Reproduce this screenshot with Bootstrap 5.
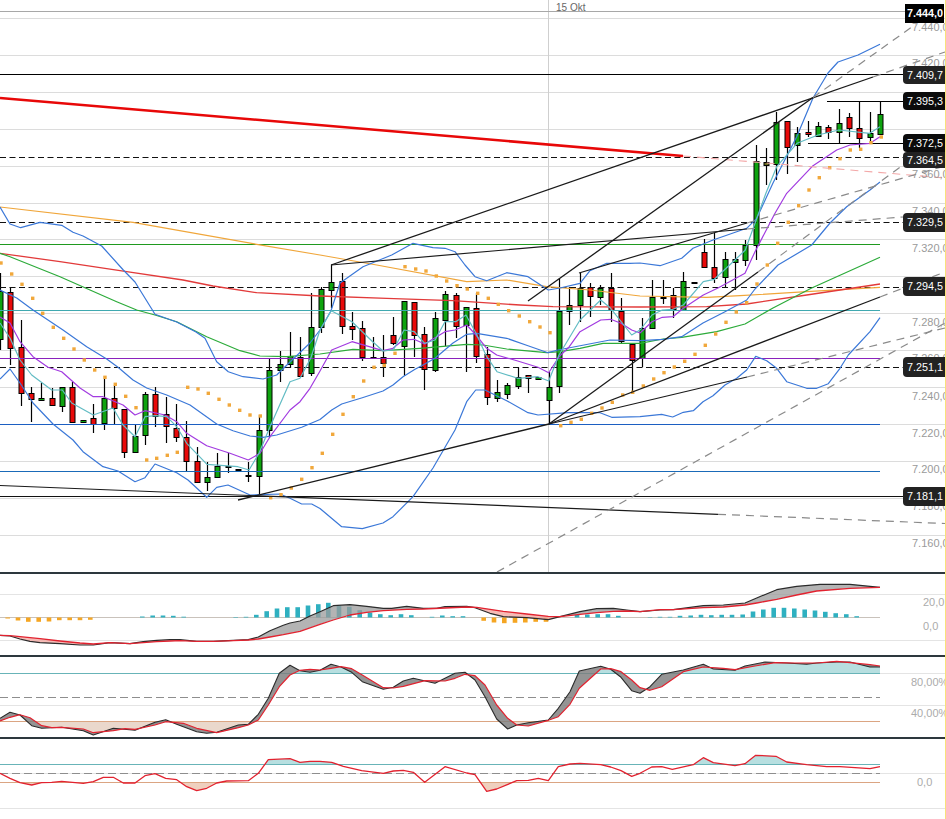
<!DOCTYPE html>
<html lang="de">
<head>
<meta charset="utf-8">
<title>Chart</title>
<link href="https://cdn.jsdelivr.net/npm/bootstrap@5.3.0/dist/css/bootstrap.min.css" rel="stylesheet">
<style>
html,body{margin:0;background:#fff;overflow:hidden}
.chart-frame{width:946px;height:819px;overflow:hidden;font-family:"Liberation Sans",Arial,sans-serif;background:#fff}
.chart-frame svg{display:block}
.edge-strip{right:0;top:0;bottom:0;width:1px;background:#f8e27a}
.price-tag{left:903px;width:42px;color:#fff;font-size:10.8px;line-height:1;background:#222;border-radius:4px 0 0 4px;padding-left:4px;white-space:nowrap}
.price-tag-top{background:#000;border-radius:0;font-weight:700;left:905px;width:39px;padding-left:2px}
.price-tag-black{background:#0b0b0b}
.axis-tag{left:912px;color:#9a9a9a;font-size:11px;line-height:12px;white-space:nowrap}
.sub-tag{color:#ababab;font-size:11px;line-height:12px;white-space:nowrap}
.date-tag{left:556px;top:2px;color:#666;font-size:10px;line-height:12px}
</style>
</head>
<body>
<div class="chart-frame position-relative">
  <svg id="plot" width="946" height="819" viewBox="0 0 946 819" xmlns="http://www.w3.org/2000/svg"></svg>

  <div class="date-tag position-absolute">15 Okt</div>

  <div class="axis-tag position-absolute" style="top:21px">7.440,0</div>
  <div class="axis-tag position-absolute" style="top:57px">7.420,0</div>
  <div class="axis-tag position-absolute" style="top:168px">7.360,0</div>
  <div class="axis-tag position-absolute" style="top:205px">7.340,0</div>
  <div class="axis-tag position-absolute" style="top:242px">7.320,0</div>
  <div class="axis-tag position-absolute" style="top:316px">7.280,0</div>
  <div class="axis-tag position-absolute" style="top:352px">7.260,0</div>
  <div class="axis-tag position-absolute" style="top:390px">7.240,0</div>
  <div class="axis-tag position-absolute" style="top:427px">7.220,0</div>
  <div class="axis-tag position-absolute" style="top:463px">7.200,0</div>
  <div class="axis-tag position-absolute" style="top:500px">7.180,0</div>
  <div class="axis-tag position-absolute" style="top:537px">7.160,0</div>

  <div class="price-tag price-tag-top position-absolute d-flex align-items-center" style="top:4px;height:19px">7.444,0</div>
  <div class="price-tag position-absolute d-flex align-items-center" style="top:66px;height:18px">7.409,7</div>
  <div class="price-tag price-tag-black position-absolute d-flex align-items-center" style="top:92px;height:18px">7.395,3</div>
  <div class="price-tag price-tag-black position-absolute d-flex align-items-center" style="top:134px;height:18px">7.372,5</div>
  <div class="price-tag position-absolute d-flex align-items-center" style="top:152px;height:16px">7.364,5</div>
  <div class="price-tag position-absolute d-flex align-items-center" style="top:213px;height:19px">7.329,5</div>
  <div class="price-tag position-absolute d-flex align-items-center" style="top:277px;height:19px">7.294,5</div>
  <div class="price-tag position-absolute d-flex align-items-center" style="top:357px;height:20px">7.251,1</div>
  <div class="price-tag position-absolute d-flex align-items-center" style="top:487px;height:19px">7.181,1</div>

  <div class="sub-tag position-absolute" style="left:923px;top:596px">20,0</div>
  <div class="sub-tag position-absolute" style="left:923px;top:620px">0,0</div>
  <div class="sub-tag position-absolute" style="left:911px;top:676px">80,00%</div>
  <div class="sub-tag position-absolute" style="left:911px;top:707px">40,00%</div>
  <div class="sub-tag position-absolute" style="left:917px;top:776px">0,0</div>

  <div class="edge-strip position-absolute"></div>
</div>

<script>
(function(){
var svg=document.getElementById('plot'),out=[],defs=[];
function pts(a){return a.map(function(p){return p[0].toFixed(1)+','+p[1].toFixed(1)}).join(' ')}
function line(x1,y1,x2,y2,c,w,dash){out.push('<line x1="'+x1+'" y1="'+y1+'" x2="'+x2+'" y2="'+y2+'" stroke="'+c+'" stroke-width="'+w+'"'+(dash?' stroke-dasharray="'+dash+'"':'')+'/>')}
function poly(a,c,w,op){out.push('<polyline fill="none" stroke-linejoin="round" points="'+pts(a)+'" stroke="'+c+'" stroke-width="'+w+'"'+(op?' opacity="'+op+'"':'')+'/>')}
function area(a,c,clip,op){out.push('<polygon points="'+pts(a)+'" fill="'+c+'"'+(clip?' clip-path="url(#'+clip+')"':'')+(op?' opacity="'+op+'"':'')+'/>')}
function rectClip(id,y,h){defs.push('<clipPath id="'+id+'"><rect x="0" y="'+y+'" width="946" height="'+h+'"/></clipPath>')}
function polyClip(id,a){defs.push('<clipPath id="'+id+'"><polygon points="'+pts(a)+'"/></clipPath>')}
/* zoomed panels: three strips of x-offset, y-offset 565 */
function z(list){var r=[];[0,320,640].forEach(function(o,i){list[i].forEach(function(p,k){if(i>0&&k===0)return;r.push([o+p[0]/3,565+p[1]/3])})});return r}

/* ---------- grid ---------- */
var GRID='#dcdcdc';
[18.5,55.5,92.5,129.5,166.5,203.5,239.5,276.5,313.5,350.5,387.5,424.5,461.5,498.5,535.5].forEach(function(y){line(0,y,945,y,GRID,1)});
[594.5,640.5,705.5,673.5,773.5,808.5].forEach(function(y){line(0,y,945,y,'#e4e4e4',1)});
line(548.5,0,548.5,573,'#cfcfcf',1);
line(0,11.5,905,11.5,'#a8a8a8',1);

/* ---------- candles: x index, wick top, body top, body bottom, wick bottom, colour ---------- */
var R='#e80a0a',G='#0ea30f',K='#6b6b20';
var C=[[0,273,291,339,350,G],[1,287,292,348,365,R],[2,320,347,393,406,R],[3,387,393,399,422,R],[4,383,398,400,400,G],[5,388,398,405,405,R],[6,387,387,406,412,G],[7,382,387,422,423,R],[8,420,420,422,422,G],[9,404,418,424,433,R],[10,376,398,423,430,G],[11,385,398,408,424,R],[12,409,409,452,458,R],[13,425,436,452,453,G],[14,392,394,435,445,G],[15,387,394,416,427,R],[16,397,414,426,443,R],[17,404,428,437,442,R],[18,421,437,461,472,R],[19,447,461,482,483,R],[20,462,477,482,491,G],[21,453,466,477,477,G],[22,453,466,467,473,G],[23,469,469,470,470,G],[24,462,475,476,482,G],[25,415,430,476,495,G],[26,359,370,430,438,G],[27,351,364,370,382,G],[28,332,356,364,368,G],[29,337,357,376,376,R],[30,293,327,373,376,G],[31,287,289,327,333,G],[32,265,282,290,308,G],[33,273,281,326,334,R],[34,312,326,329,340,R],[35,321,328,357,361,R],[36,337,357,358,359,R],[37,335,357,363,377,R],[38,317,335,343,345,R],[39,301,301,346,376,G],[40,302,302,335,357,R],[41,327,334,369,390,R],[42,312,318,370,372,G],[43,291,294,320,346,G],[44,293,295,326,338,R],[45,307,307,325,372,G],[46,293,308,356,363,R],[47,347,354,397,405,R],[48,380,392,398,402,G],[49,383,385,394,399,G],[50,367,377,386,389,G],[51,375,375,378,393,R],[52,377,377,379,379,G],[53,372,387,400,424,G],[54,278,311,386,393,G],[55,287,305,311,325,G],[56,273,288,305,322,G],[57,283,287,296,317,R],[58,285,288,297,305,G],[59,273,288,310,322,R],[60,298,311,341,343,R],[61,344,344,360,392,R],[62,318,328,358,367,G],[63,280,297,328,328,G],[64,280,297,298,304,K],[65,288,295,309,318,R],[66,272,281,310,310,G],[67,282,282,283,283,G],[68,239,252,267,267,R],[69,233,267,278,283,R],[70,252,259,277,288,G],[71,252,259,262,290,G],[72,240,245,260,266,G],[73,145,161,245,260,G],[74,148,162,165,185,K],[75,112,122,164,180,G],[76,121,121,147,174,R],[77,127,133,145,162,G],[78,121,132,134,137,R],[79,122,126,136,136,G],[80,125,127,132,139,R],[81,109,123,132,143,G],[82,113,117,128,137,R],[83,102,128,138,148,R],[84,112,133,137,143,G],[85,102,114,134,134,G]];
C.forEach(function(c){
  var x=Math.round(c[0]*10.353)+.5,bt=c[2]+.5,h=Math.max(c[3]-c[2],1);
  line(x,c[1],x,c[4],'#000',1.2);
  out.push('<rect x="'+(x-2.5)+'" y="'+bt+'" width="5" height="'+h+'" fill="'+c[5]+'" stroke="#000" stroke-width="1"/>');
});

/* ---------- horizontal levels ---------- */
line(0,74.5,905,74.5,'#000',1.1);
line(0,157.5,905,157.5,'#111',1,'6 3.5');
line(0,222.5,905,222.5,'#111',1,'6 3.5');
line(0,244.5,880,244.5,'#1f9a1f',1.1);
line(0,287.5,905,287.5,'#111',1,'6 3.5');
line(0,310.5,880,310.5,'#3fa9b0',1.1);
line(0,358.5,880,358.5,'#8a22bd',1.2);
line(0,367.5,905,367.5,'#111',1,'6 3.5');
line(0,424.5,880,424.5,'#1c5fc2',1.2);
line(0,471.5,880,471.5,'#1a6ab8',1.2);
line(0,496.5,905,496.5,'#111',1.1);
line(827,101.5,905,101.5,'#000',1);
line(808,143.5,905,143.5,'#000',1);

/* ---------- moving averages ---------- */
poly([[0,207],[133,222.3],[256.7,244.3],[320,255],[376.7,265],[466.7,281.7],[506.7,280],[546.7,286.7],[590,290],[640,296],[706.7,297.3],[740,295.7],[806.7,291.7],[880,287.3]],'#f0a63a',1.2);
poly([[0,253.3],[60,261.7],[126.7,271.7],[183,280],[213,286],[256.7,292.7],[320,296],[386.7,298.3],[453,300.7],[520,305],[553,306.7],[640,307],[706.7,306.7],[746.7,304],[806.7,295],[880,284]],'#e23a3a',1.3);
poly([[0,253.3],[10,256.7],[60,276.7],[90,290],[116.7,301.7],[136.7,310],[155,315],[176.7,321.7],[206.7,336.7],[240,350.7],[260,356],[286.7,356.7],[320,354],[353,349.3],[383,350.7],[420,348.3],[466.7,344.3],[483,345],[506.7,349],[546.7,352.7],[560,351.7],[580,348.3],[603,343.3],[640,343.3],[663,339],[681.7,337.3],[716.7,331.7],[745,324],[773,308],[811.7,288],[880,257.3]],'#2cab3a',1.2);

/* ---------- bollinger bands ---------- */
var BLUE='#3b78d8';
poly([[0,207],[10,224],[20.7,227.7],[40,222.3],[61.7,225.3],[73,232.3],[83,236],[101.7,246],[123.3,270],[135,282],[155,314.3],[176.7,322],[196,332],[205,338.3],[216.7,361.7],[228.3,371.7],[243,376.7],[263,379],[276.7,375],[290,362],[310,343],[320,330],[331,310.7],[340,283],[363,266.7],[391.7,255],[413,243.3],[433,247.7],[445,248.3],[455,251.7],[465,265],[475,276.7],[486.7,280.7],[506.7,272.7],[528,276.7],[548.3,290],[560,288],[580,283.3],[590,270.7],[606.7,263.3],[630,263.3],[640,263],[660,265.7],[681.7,258.3],[693,248.3],[713,240],[736.7,231.7],[746.7,228.3],[756.7,218.3],[773,183],[796.7,136.7],[813,98],[828,73],[838,62],[858,55],[880,44.3]],BLUE,1.2);
poly([[0,379],[10,369],[20,383],[33,403],[53,424],[73,440],[83,451.7],[103,466.7],[118,471],[135,481.7],[145,477.7],[155,464],[176.7,472.7],[188,480],[206.7,497.3],[216.7,487.3],[228,485],[250,495],[280,494],[290,498.3],[301.7,504],[311.7,504],[320,508.5],[341.7,526.7],[362.3,528.7],[383,523],[393,516.7],[413,496.7],[433,468],[455,430],[466.7,401.7],[475.7,390],[485,390],[506.7,400.7],[528,412.7],[538,415],[568,412.7],[600,412.7],[611.7,417.3],[640,416.7],[661.7,414.3],[672.7,417],[683.3,412.3],[693.3,410.7],[703,401.7],[713,395.7],[725,385],[736.7,378.3],[746.7,370],[755.7,356.3],[766.7,360.7],[776.7,368.3],[786.7,381.7],[806.7,388.3],[816.7,388.3],[828.3,383.7],[840,368.3],[848.3,355],[870,331.7],[880,317.7]],BLUE,1.2);
poly([[0,290],[16.7,298],[33,310],[63,330],[86.7,346.7],[106.7,359],[118,367.3],[133,380],[146.7,388],[166.7,395],[190,405],[216.7,424],[233,430.7],[250,436],[263,437.3],[276.7,435],[301.7,427.3],[320,419.5],[331.7,410],[341.7,404],[362.3,397.7],[383,391],[393,385],[403,376.7],[415,369.3],[423,365],[435,358.3],[453,343],[466.7,334.3],[476.7,333.3],[506.7,338.3],[528,345.7],[548,352.7],[558,350],[610,340],[640,340.7],[663,339.3],[681.7,336.7],[703,323],[725,311.7],[746.7,300],[755,289],[778,265],[811.7,245],[830,223],[846.7,206.7],[870,190],[880,182]],BLUE,1.2);

/* ---------- purple + teal EMAs ---------- */
poly([[0,317],[10,323],[20,341.7],[33,356.7],[48,367.3],[61.7,371.7],[80,388],[93.3,396.7],[103,396.7],[123,405],[135,415],[145,410.7],[165,415],[176.7,421.7],[186.7,433.3],[206.7,445.7],[230,453.3],[248.3,460],[260,453.3],[270,436.7],[290,410],[300,401.7],[310,388.3],[320,371],[331.7,350],[352,341.7],[383,350.7],[393,348.3],[403,340],[414,339.3],[424.7,344],[445,331.7],[455,330],[466.7,325],[476,335],[486.7,348.3],[496.7,355],[517.7,361],[538,367.3],[548.7,372.7],[559,356.7],[569.3,346.7],[580,331.7],[600.7,320],[610.7,319.3],[621,323.3],[631.7,330],[640,333],[652,321.7],[662.3,317.3],[673,316.7],[683.3,308.3],[703.3,295],[718,288],[745,273.3],[755,251.7],[775,213.3],[786.7,193.3],[813,165.7],[836.7,150],[850,145],[870,143.3],[880,136.7]],'#a23be0',1.2);
poly([[0,323],[10,338],[20,360],[31.7,375],[51.7,390],[62.3,390],[71.7,403],[93.3,415],[113,408],[123,425],[135,436.7],[145,416.7],[155.7,415.7],[166.7,416.7],[176.7,426.7],[186.7,443.3],[207,464.3],[238,466.7],[249,470],[259,453.3],[270,426.7],[290,381.7],[300,378.3],[310.7,358.3],[320,330],[331.3,310.7],[352,321.7],[372.7,341.7],[383,351],[393.3,350],[404,330],[414.3,331.7],[424.7,343.3],[435,340],[445,321.7],[455.7,321.7],[466,315],[476,333.3],[486.7,356.7],[497,371.7],[517.7,378.3],[538,376.7],[548.7,381],[559,355],[580,320],[600.7,300],[610.7,308.3],[631.7,335],[640,330],[652,315],[662.3,310],[673,309.3],[683.3,305],[703.3,281.7],[714.3,279.3],[735,260],[745.3,250],[755,223.3],[766,193],[776.7,166.7],[797,143.3],[818,135],[838.7,130],[869.7,133.3],[880,126.7]],'#62bcc4',1.2);

/* ---------- parabolic SAR ---------- */
var S=[[1,263],[11.7,274],[22,284.3],[32.7,298.3],[42.7,313.3],[53.3,327.3],[63.7,338.3],[74,349],[84.3,360],[94.7,370],[105,377.3],[115.3,384.3],[125.7,396.3],[136,407.7],[146.7,460],[156.7,458.3],[167.3,455.3],[177.3,452.3],[187.7,387.3],[198,389],[208.3,393.3],[219,399.3],[229.3,405],[239.7,410.3],[250,415],[260.3,416],[270.7,497.7],[281,494.7],[291.3,488],[301.7,479.3],[312,467.7],[322.3,453.3],[332.7,434.3],[343,414.3],[353.3,396.7],[363.7,381],[374,367.3],[384.3,365.3],[395,353.3],[405,266.7],[415.7,269],[426,271],[436.3,276],[446.7,281],[457,285.7],[467.3,289],[477.7,293.3],[488.3,298.3],[498.3,304.3],[508.7,310.7],[519.3,316],[529.7,321.7],[540,327],[550,332.7],[560.7,425.7],[571,422.3],[581.3,419.3],[591.7,413.3],[602,408],[612.3,402.3],[622.7,395],[632.7,392.3],[643.3,386],[653.7,379],[664,372.7],[674.3,367],[684.7,361.3],[695,354.3],[705.3,345.3],[715.7,334],[726,322.3],[736.3,312],[746.7,302.7],[757,284],[767.3,265],[777.7,243.3],[788.3,222.3],[798.7,205.7],[809,190],[819.3,177.7],[829.7,167.7],[840,158.7],[850.3,150],[860.7,149.3],[871,142.7],[881.3,137]];
S.forEach(function(p){out.push('<rect x="'+(p[0]-1.7).toFixed(1)+'" y="'+(p[1]-1.7).toFixed(1)+'" width="3.4" height="3.4" fill="#f1a83c"/>')});

/* ---------- trend lines ---------- */
var T='#1a1a1a',D='#8a8a8a',DD='8 6';
line(0,98,683,156,'#e80808',2.6);
line(683,156,945,178,'#f3a8a8',1.1,DD);
line(238,500,549,424,T,1.3);
line(0,485.5,718,514.3,T,1.2);
line(718,514.3,945,523.5,D,1.2,DD);
line(331,265,873,77,T,1.3);
line(873,77,945,52,D,1.2,DD);
line(331,265,747,229,T,1.2);
line(747,229,903,217,D,1.2,DD);
line(528,301,813,97.5,T,1.3);
line(813,97.5,916,24,D,1.2,DD);
line(549,424,758,272,T,1.3);
line(758,272,945,134,D,1.2,DD);
line(549,424,880,297,T,1.3);
line(880,297,945,272,D,1.2,DD);
line(549,424,747,377,T,1.2);
line(747,377,945,328,D,1.2,DD);
line(579,273,747,223,T,1.2);
line(747,223,945,166,D,1.2,DD);
line(497,572,945,323,D,1.2,DD);

/* ---------- separators ---------- */
[573,656,738].forEach(function(y){line(0,y,945,y,'#2d383d',2)});

/* ---------- pane 1: MACD ---------- */
var base=617.5;
var up=[[427,1],[458,2],[489,2],[520,1.7],[551,.8],[707,.5],[738,.7],[769,2.7],[800,6.3],[831,9],[862,10.3],[893,10.3],[924,12],[955,13.3]].map(function(b){return[b[0]/3,b[1]]})
 .concat([[25,14.7],[57,11.7],[88,10.7],[119,7.3],[150,5],[181,3.3],[212,2.3],[243,3.3],[274,2.3],[336,.7],[367,2],[398,1.3],[429,1.3],[771,2.7],[802,3],[833,3.3],[864,3.3],[895,1.7]].map(function(b){return[320+b[0]/3,b[1]]}))
 .concat([[30,.4],[60,.7],[90,.7],[120,1.7],[152,2],[183,2.7],[214,2.3],[245,2.7],[276,2.7],[308,3],[339,6],[370,8],[401,9.7],[432,9.7],[463,9],[494,8],[525,7],[556,5.7],[587,4.3],[619,3.3],[650,1.3]].map(function(b){return[640+b[0]/3,b[1]]}));
var down=[[23,1],[54,3],[85,4.3],[116,4.3],[147,4],[178,2.7],[209,2.7],[240,2.7],[271,2.3]].map(function(b){return[b[0]/3,b[1]]})
 .concat([[491,3.3],[522,5],[553,5.7],[585,5.3],[616,5],[647,4.3],[678,4.3]].map(function(b){return[320+b[0]/3,b[1]]}));
var m1=z([[[0,211],[30,213],[60,222],[90,229],[120,233],[180,236],[240,240],[280,240],[330,233],[390,236],[430,230],[470,226],[510,224],[540,224],[590,229],[640,229],[700,226],[745,224],[775,216],[810,197],[850,181],[870,174],[900,168],[930,153],[960,140]],
 [[0,140],[40,122],[90,119],[140,124],[190,130],[215,130],[260,124],[310,130],[350,130],[375,125],[440,124],[465,128],[510,145],[550,155],[620,158],[685,164],[720,155],[780,140],[830,131],[880,130],[920,135],[960,140]],
 [[0,140],[60,135],[100,134],[190,122],[250,120],[315,114],[350,99],[410,74],[470,64],[540,58],[630,58],[720,67]]]);
var m2=z([[[0,211],[30,212],[60,215],[120,221],[180,228],[240,234],[280,237],[330,233],[390,236],[430,233],[470,230],[510,228],[540,227],[590,229],[640,229],[700,227],[745,225],[775,222],[810,216],[850,209],[900,199],[960,178]],
 [[0,178],[40,165],[90,150],[140,142],[190,137],[260,133],[310,132],[375,129],[440,126],[470,127],[510,133],[550,139],[620,147],[685,154],[720,155],[780,148],[830,143],[880,139],[920,138],[960,140]],
 [[0,140],[60,134],[100,134],[190,128],[250,126],[315,120],[350,114],[410,103],[470,90],[530,78],[630,70],[720,67]]]);
function regionAbove(a,top){return [[a[0][0],top]].concat(a).concat([[a[a.length-1][0],top]])}
function regionBelow(a,bot){return [[a[0][0],bot]].concat(a).concat([[a[a.length-1][0],bot]])}
function between(a,b){return a.concat(b.slice().reverse())}
polyClip('m-up',regionAbove(m2,574));polyClip('m-dn',regionBelow(m2,656));
line(0,base,880,base,'#c9c2bb',1);
up.forEach(function(b){out.push('<rect x="'+(b[0]-2.3).toFixed(1)+'" y="'+(base-b[1]).toFixed(1)+'" width="4.6" height="'+b[1]+'" fill="#2fb0c0"/>')});
down.forEach(function(b){out.push('<rect x="'+(b[0]-2.3).toFixed(1)+'" y="'+base+'" width="4.6" height="'+b[1]+'" fill="#f5a623"/>')});
area(between(m1,m2),'#9b9b9b','m-up',.75);
area(between(m1,m2),'#f4aaa4','m-dn',.8);
poly(m1,'#2b2b2b',1.2);poly(m2,'#e2222f',1.3);

/* ---------- pane 2: stochastic ---------- */
var s1=z([[[0,460],[30,442],[60,450],[95,482],[125,490],[155,488],[185,487],[250,497],[280,510],[340,490],[405,496],[465,472],[497,464],[530,478],[590,500],[620,505],[650,502],[715,480],[745,478],[775,448],[805,400],[838,325],[870,301],[900,317],[930,322],[960,316]],
 [[0,316],[33,298],[63,306],[95,322],[127,350],[190,373],[220,367],[250,348],[280,340],[345,355],[405,325],[435,322],[465,345],[495,395],[530,462],[563,492],[590,480],[625,473],[685,465],[715,430],[750,380],[778,318],[842,304],[872,313],[903,337],[935,377],[960,385]],
 [[0,385],[30,365],[65,328],[130,315],[190,298],[220,312],[285,316],[315,303],[375,291],[440,294],[500,298],[530,294],[590,291],[630,291],[690,306],[720,306]]]);
var s2=z([[[0,468],[30,457],[60,449],[90,458],[125,482],[155,488],[185,487],[250,492],[280,503],[340,497],[375,491],[405,493],[465,480],[497,470],[550,475],[590,490],[650,503],[715,488],[745,480],[775,465],[805,420],[838,365],[870,330],[900,316],[930,313],[960,315]],
 [[0,318],[33,310],[63,305],[95,311],[127,330],[190,368],[220,369],[250,364],[315,347],[375,348],[405,340],[435,328],[465,332],[495,360],[530,420],[563,460],[590,480],[625,483],[685,466],[715,455],[750,418],[778,370],[842,312],[872,311],[903,320],[935,345],[960,368]],
 [[0,362],[30,376],[65,365],[130,320],[190,306],[250,310],[285,314],[345,303],[405,293],[465,294],[530,294],[590,289],[630,293],[690,299],[720,303]]]);
rectClip('s-hi',657,16.5);rectClip('s-lo',721.5,17);
area(s2.concat([[880,673.5],[0,673.5]]),'#b7dfe0','s-hi');
area(s2.concat([[880,721.5],[0,721.5]]),'#ead8cc','s-lo');
line(0,673.5,880,673.5,'#68b4b8',1);
line(0,697.5,880,697.5,'#8e8e8e',1,'8 4');
line(0,721.5,880,721.5,'#dba582',1);
area(between(s1,s2),'#7d7d7d',null,.82);
poly(s1,'#2b2b2b',1.1);poly(s2,'#e2222f',1.2);

/* ---------- pane 3: oscillator ---------- */
var o=z([[[0,625],[30,640],[60,653],[95,660],[125,653],[155,652],[185,649],[250,655],[280,650],[310,637],[340,637],[370,654],[405,654],[435,632],[465,626],[497,640],[530,644],[560,665],[590,677],[620,670],[650,654],[680,648],[745,647],[775,625],[805,584],[870,581],[900,592],[930,589],[960,589]],
 [[0,589],[35,592],[70,604],[125,617],[190,625],[220,618],[250,616],[280,622],[314,652],[375,605],[440,624],[465,629],[500,679],[530,672],[590,647],[625,646],[655,640],[685,647],[715,605],[750,597],[780,595],[842,599],[872,606],[903,617],[935,634],[960,625]],
 [[0,625],[35,606],[65,605],[97,613],[160,599],[190,578],[220,593],[285,602],[315,596],[347,571],[408,574],[440,591],[500,599],[560,605],[600,605],[690,611],[720,605]]]);
rectClip('o-hi',739,25.5);rectClip('o-lo',782.5,30);
area(o.concat([[880,764.5],[0,764.5]]),'#b7dfe0','o-hi');
area(o.concat([[880,782.5],[0,782.5]]),'#efd0bf','o-lo');
line(0,764.5,880,764.5,'#68b4b8',1);
line(0,773.5,880,773.5,'#8e8e8e',1,'8 4');
line(0,782.5,880,782.5,'#dba582',1);
poly(o,'#e2222f',1.3);

svg.innerHTML='<defs>'+defs.join('')+'</defs>'+out.join('');
})();
</script>
<script src="https://cdn.jsdelivr.net/npm/bootstrap@5.3.0/dist/js/bootstrap.bundle.min.js"></script>
</body>
</html>
